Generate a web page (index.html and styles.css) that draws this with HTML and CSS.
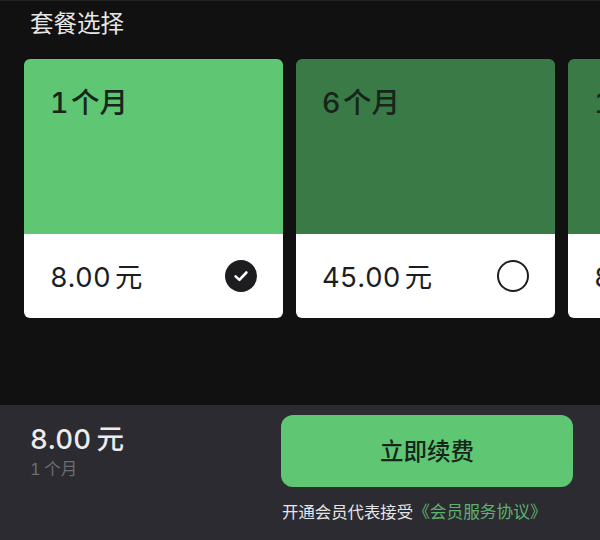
FILE: index.html
```html
<!DOCTYPE html>
<html lang="zh">
<head>
<meta charset="utf-8">
<title>套餐选择</title>
<link rel="stylesheet" href="styles.css">
</head>
<body>
<main class="page">
  <section class="plans">
    <h1 class="plans-title">套餐选择</h1>
    <div class="plan-row">
      <article class="plan plan-active">
        <div class="plan-head">1 个月</div>
        <div class="plan-foot">
          <span class="plan-price">8.00 元</span>
          <svg class="radio" viewBox="0 0 32 32" aria-hidden="true"><circle cx="16" cy="16" r="16" fill="#1d1d1f"/><path d="M10.6 16.4l3.8 3.5 7-7.4" fill="none" stroke="#fff" stroke-width="2.6" stroke-linecap="round" stroke-linejoin="round"/></svg>
        </div>
      </article>
      <article class="plan plan-idle">
        <div class="plan-head">6 个月</div>
        <div class="plan-foot">
          <span class="plan-price">45.00 元</span>
          <svg class="radio" viewBox="0 0 32 32" aria-hidden="true"><circle cx="16" cy="16" r="15" fill="none" stroke="#1d1d1f" stroke-width="2"/></svg>
        </div>
      </article>
      <article class="plan plan-idle">
        <div class="plan-head">12 个月</div>
        <div class="plan-foot">
          <span class="plan-price">80.00 元</span>
        </div>
      </article>
    </div>
  </section>
  <footer class="checkout">
    <div class="summary">
      <div class="summary-price">8.00 元</div>
      <div class="summary-term">1 个月</div>
    </div>
    <div class="action">
      <button class="renew" type="button">立即续费</button>
      <p class="terms">开通会员代表接受<span class="terms-link">《会员服务协议》</span></p>
    </div>
  </footer>
</main>
</body>
</html>
```
FILE: styles.css
```css
* { box-sizing: border-box; }
html, body { margin: 0; padding: 0; }
body {
  width: 600px;
  height: 540px;
  overflow: hidden;
  background: #111;
  font-family: Inter, "Noto Sans CJK SC", sans-serif;
  font-variant-numeric: tabular-nums;
}
.page { display: flex; flex-direction: column; height: 540px; }
.plans {
  flex: 0 0 405px;
  padding: 6px 0 0 24px;
  overflow: hidden;
  background: #111;
  border-top: 1px solid #222;
}
.plans-title {
  margin: 0 0 18px 6px;
  height: 34px;
  font-size: 23.5px;
  line-height: 34px;
  font-weight: 400;
  color: #e6e6e6;
}
.plan-row { display: flex; gap: 13px; width: 900px; }
.plan {
  flex: 0 0 259px;
  height: 259px;
  border-radius: 6px;
  overflow: hidden;
  display: flex;
  flex-direction: column;
}
.plan-head {
  flex: 0 0 175px;
  padding: 24px 26px 0;
  font-size: 28.5px;
  line-height: 40px;
  font-weight: 500;
  word-spacing: -5px;
  color: #16261a;
}
.plan-active .plan-head { background: #5fc674; }
.plan-idle .plan-head { background: #3a7a47; }
.plan-foot {
  flex: 1;
  background: #fff;
  padding: 0 26px 3px;
  display: flex;
  align-items: center;
  justify-content: space-between;
}
.plan-price { font-size: 27.4px; font-weight: 400; word-spacing: -3px; color: #1d1d1f; }
.radio { width: 32px; height: 32px; display: block; margin-top: 3px; }
.checkout {
  flex: 1;
  background: #2b2b31;
  display: flex;
  justify-content: space-between;
  padding: 10px 27px 0 30px;
}
.summary { padding-top: 6px; }
.summary-price {
  font-size: 27.6px;
  line-height: 36px;
  font-weight: 500;
  word-spacing: -2px;
  color: #ececec;
}
.summary-term {
  font-size: 16.5px;
  line-height: 24px;
  word-spacing: -1px;
  color: #6d6d72;
}
.action { width: 292px; }
.renew {
  display: block;
  width: 292px;
  height: 72px;
  border: 0;
  border-radius: 12px;
  background: #5fc674;
  color: #16261a;
  font-family: inherit;
  font-size: 23.5px;
  font-weight: 500;
  padding: 0 0 3px;
}
.terms {
  margin: 13px 0 0 1px;
  font-size: 16.4px;
  line-height: 25px;
  color: #e6e6e6;
  white-space: nowrap;
}
.terms-link { color: #5cb26e; font-size: 16.7px; }
```
